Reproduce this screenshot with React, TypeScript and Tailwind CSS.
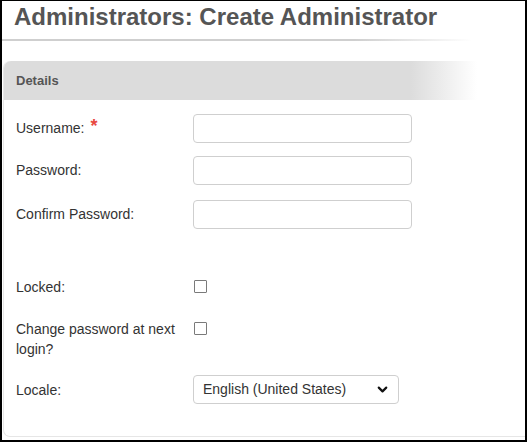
import React from 'react';
import { ChevronDown } from 'lucide-react';

const font = { fontFamily: '"Liberation Sans", Arial, sans-serif' };

function Label({ children }: { children: React.ReactNode }) {
    return <div className="w-[189px] pl-[12px] text-[14px] leading-[20px] text-[#333]">{children}</div>;
}

function TextRow({ label, required }: { label: string; required?: boolean }) {
    return (
        <div className="flex items-center h-[28px]">
            <Label>
                {label}
                {required && <span className="ml-[6px] text-[#e8483f] text-[18px] font-bold align-top leading-[16px]">*</span>}
            </Label>
            <input className="w-[219px] h-[29px] border border-[#cfcfcf] rounded-[4px] bg-white" />
        </div>
    );
}

function CheckRow({ label }: { label: React.ReactNode }) {
    return (
        <div className="flex items-start">
            <Label>{label}</Label>
            <div className="mt-[3px] ml-[1px] w-[13px] h-[13px] border border-[#7a7a7a] rounded-[1px] bg-white" />
        </div>
    );
}

export default function App() {
    return (
        <div style={font} className="w-[527px] h-[442px] bg-white border-black border-t border-l-2 border-r-2 border-b-2 overflow-hidden">
            <div className="pl-[12px] pt-[1px] h-[38px] text-[24px] leading-[30px] font-bold text-[#555]">
                Administrators: Create Administrator
            </div>
            <div className="h-[2px] w-[470px] bg-[linear-gradient(to_right,#cfcfcf_75%,#ffffff_100%)]" />
            <div className="mt-[20px] ml-[1px] h-[376px] rounded-l-[7px] border-l border-b border-[#e6e6e6]">
                <div className="h-[39px] w-[473px] rounded-tl-[7px] flex items-center pl-[12px] text-[13px] font-bold text-[#555] bg-[linear-gradient(to_right,#dcdcdc_86%,#ffffff_100%)]">
                    Details
                </div>
                <div className="pt-[14px] flex flex-col">
                    <TextRow label="Username:" required />
                    <div className="h-[14px]" />
                    <TextRow label="Password:" />
                    <div className="h-[16px]" />
                    <TextRow label="Confirm Password:" />
                    <div className="h-[49px]" />
                    <CheckRow label="Locked:" />
                    <div className="h-[22px]" />
                    <CheckRow label={<>Change password at next<br />login?</>} />
                    <div className="h-[16px]" />
                    <div className="flex items-center h-[29px]">
                        <Label>Locale:</Label>
                        <div className="w-[206px] h-[29px] border border-[#cfcfcf] rounded-[4px] flex items-center justify-between pl-[9px] pr-[8px] text-[14px] text-[#333]">
                            <span>English (United States)</span>
                            <ChevronDown size={15} strokeWidth={3.5} className="text-[#111]" />
                        </div>
                    </div>
                </div>
            </div>
        </div>
    );
}
